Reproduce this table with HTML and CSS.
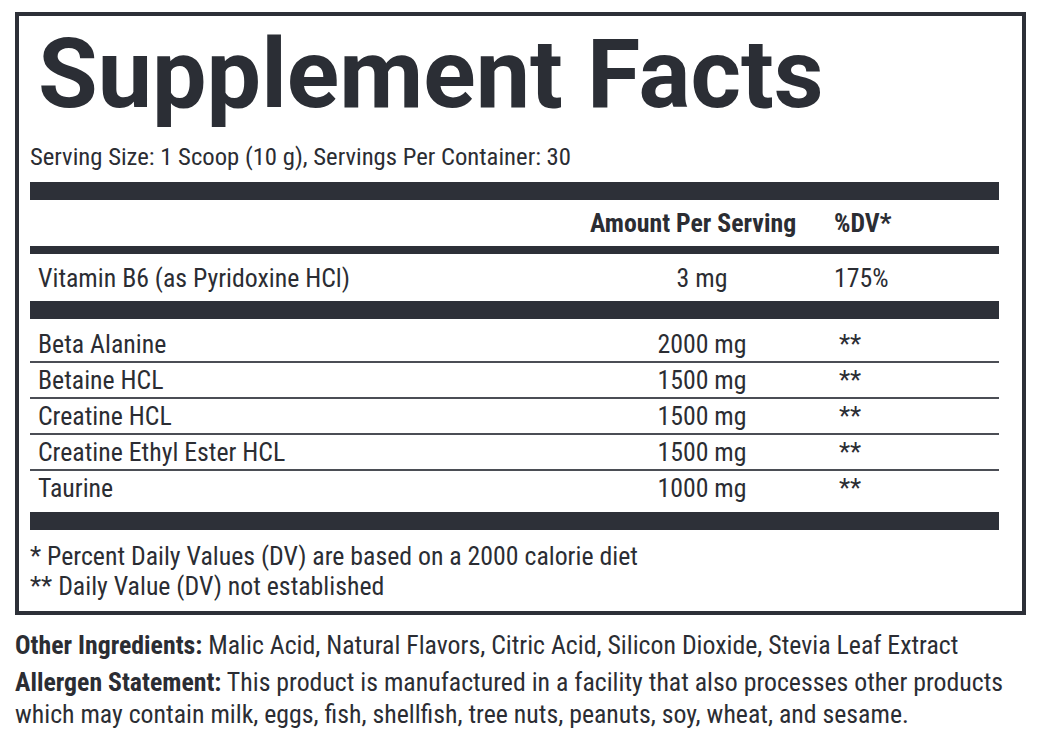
FILE: index.html
```html
<!DOCTYPE html>
<html lang="en">
<head>
<meta charset="utf-8">
<title>Supplement Facts</title>
<link rel="stylesheet" href="styles.css">
</head>
<body>
<div class="label">
  <h1 class="title">Supplement Facts</h1>
  <p class="serving">Serving Size: 1 Scoop (10 g), Servings Per Container: 30</p>
  <div class="bar thick"></div>
  <div class="row head">
    <span class="name"></span>
    <span class="amt">Amount Per Serving</span>
    <span class="dv">%DV*</span>
  </div>
  <div class="bar medium"></div>
  <div class="row vit">
    <span class="name">Vitamin B6 (as Pyridoxine HCl)</span>
    <span class="amt c">3 mg</span>
    <span class="dv">175%</span>
  </div>
  <div class="bar thick"></div>
  <div class="rows">
    <div class="row item first">
      <span class="name">Beta Alanine</span>
      <span class="amt c">2000 mg</span>
      <span class="dv star">**</span>
    </div>
    <div class="row item">
      <span class="name">Betaine HCL</span>
      <span class="amt c">1500 mg</span>
      <span class="dv star">**</span>
    </div>
    <div class="row item">
      <span class="name">Creatine HCL</span>
      <span class="amt c">1500 mg</span>
      <span class="dv star">**</span>
    </div>
    <div class="row item">
      <span class="name">Creatine Ethyl Ester HCL</span>
      <span class="amt c">1500 mg</span>
      <span class="dv star">**</span>
    </div>
    <div class="row item last">
      <span class="name">Taurine</span>
      <span class="amt c">1000 mg</span>
      <span class="dv star">**</span>
    </div>
  </div>
  <div class="bar thick"></div>
  <div class="notes">
    <p>* Percent Daily Values (DV) are based on a 2000 calorie diet</p>
    <p>** Daily Value (DV) not established</p>
  </div>
</div>
<p class="other"><b>Other Ingredients:</b> Malic Acid, Natural Flavors, Citric Acid, Silicon Dioxide, Stevia Leaf Extract</p>
<p class="allergen"><b>Allergen Statement:</b> This product is manufactured in a facility that also processes other products which may contain milk, eggs, fish, shellfish, tree nuts, peanuts, soy, wheat, and sesame.</p>
</body>
</html>
```

FILE: styles.css
```css
* { box-sizing: border-box; }

html, body { background: #ffffff; }

body {
  margin: 0;
  padding: 12px 0 0 15px;
  font-family: "Roboto Condensed", Roboto, "Liberation Sans", sans-serif;
  font-size: 25.8px;
  color: #2b2d33;
}

p { margin: 0; }

.label {
  width: 1011px;
  border: 4px solid #2d3038;
  padding: 0 23px 10px 11px;
  display: flex;
  flex-direction: column;
}

.title {
  margin: 10px 0 0 0;
  padding-left: 8px;
  font-family: Roboto, "Liberation Sans", sans-serif;
  font-weight: 700;
  font-size: 97px;
  line-height: 97px;
  color: #2b2e35;
}

.serving {
  margin-top: 19px;
  font-size: 24.7px;
  line-height: 30px;
}

.bar { background: #2d3038; }
.bar.thick { height: 18px; margin-top: 10px; }
.bar.medium { height: 8px; }
.rows + .bar.thick, .vit + .bar.thick { margin-top: 0; }

.row {
  display: grid;
  grid-template-columns: 560px 224px 1fr;
  align-items: center;
}

.row .name { padding-left: 8px; }
.row .amt.c { text-align: center; }
.row .dv { padding-left: 20px; }
.row .dv.star { padding-left: 25px; }

.row.head {
  height: 46px;
  line-height: 46px;
  font-weight: 700;
}

.row.vit {
  height: 47px;
  line-height: 47px;
  padding-top: 1px;
}

.row.item {
  line-height: 34px;
  border-bottom: 2px solid #4b4e55;
}
.row.item.first { padding-top: 8px; }
.row.item.last { border-bottom: 0; padding-bottom: 7px; }

.notes {
  margin-top: 11px;
  line-height: 30px;
}

.other {
  margin-top: 15px;
  line-height: 30px;
}

.allergen {
  margin-top: 6px;
  line-height: 32px;
  width: 1000px;
}

b { font-weight: 700; }
```
